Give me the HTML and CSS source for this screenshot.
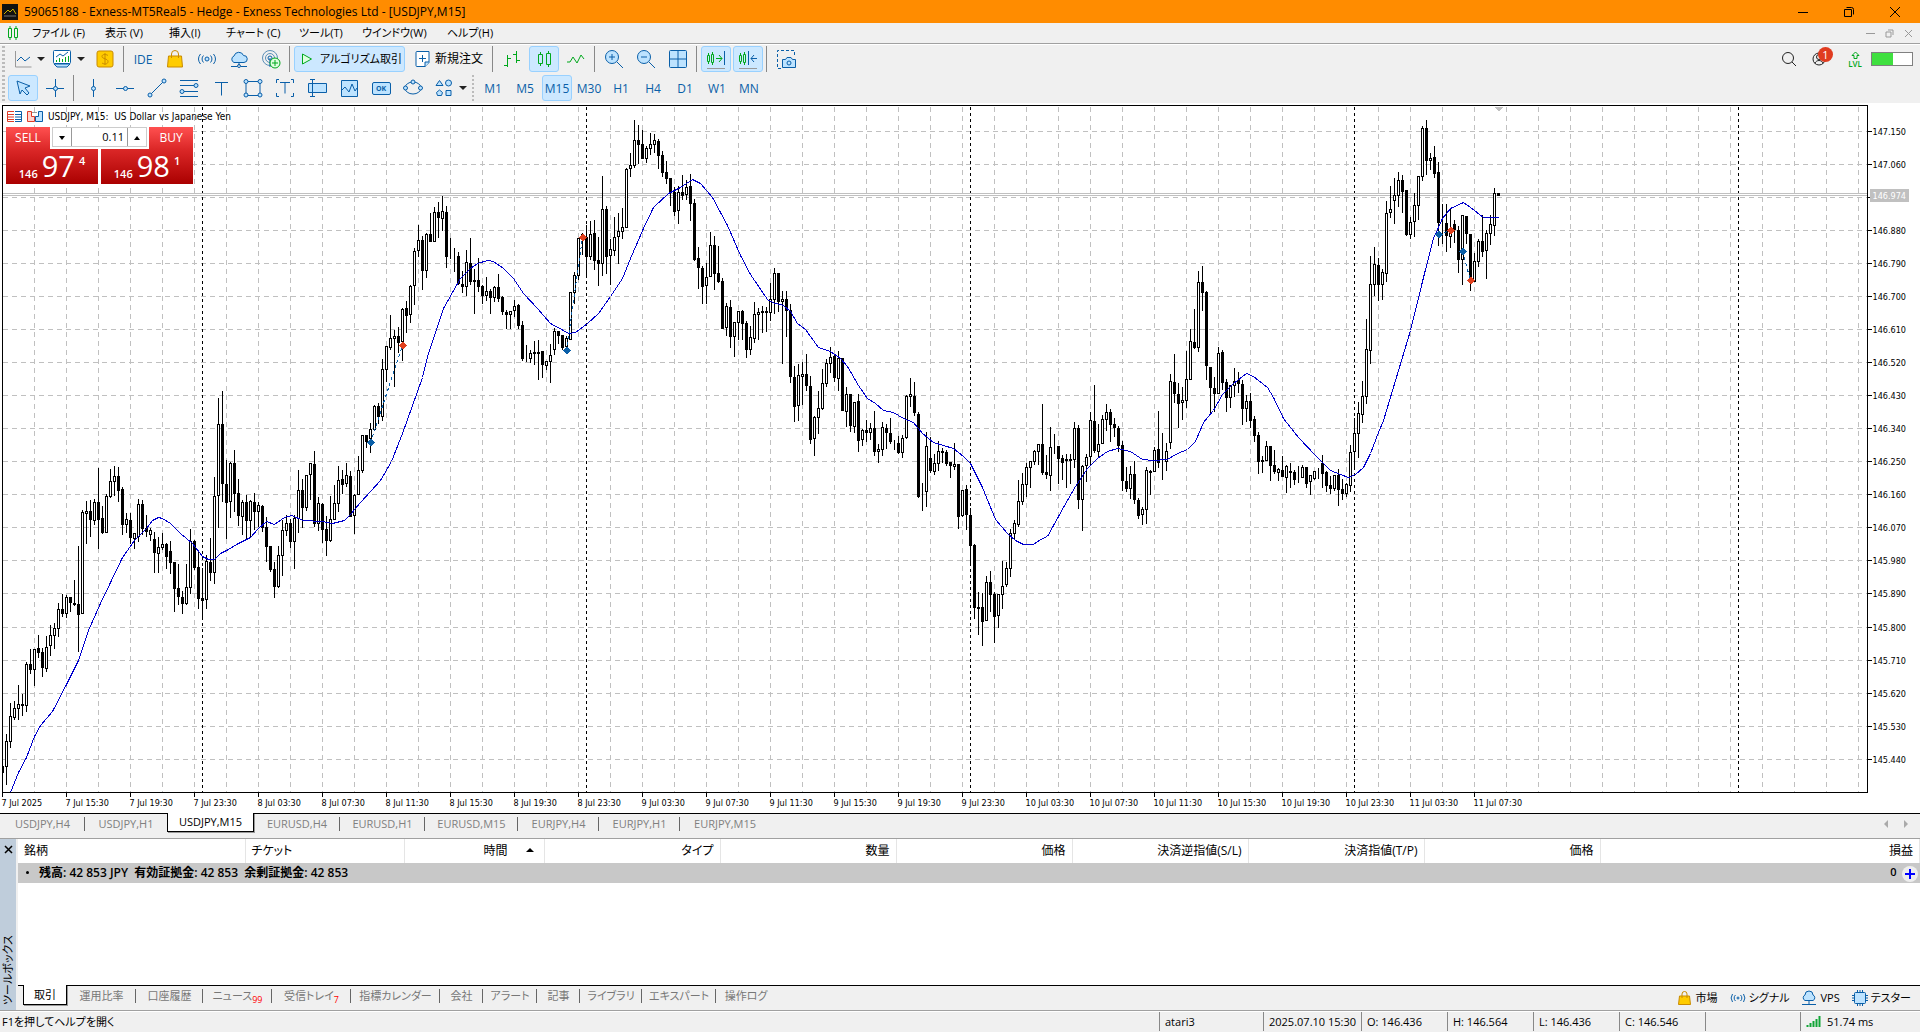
FILE: index.html
```html
<!DOCTYPE html>
<html lang="ja">
<head>
    <meta charset="UTF-8">
    <title>59065188 - Exness-MT5Real5 - Hedge</title>
    <link rel="stylesheet" href="styles.css">
</head>
<body>
<header class="titlebar">
    <svg class="logo" width="16" height="16" viewBox="0 0 16 16"><rect width="16" height="16" fill="#111"/><path d="M2 10L6 6l2 2 3-3 3 5" fill="none" stroke="#c9b100"/><path d="M2 12h12" stroke="#777"/></svg>
    <h1>59065188 - Exness-MT5Real5 - Hedge - Exness Technologies Ltd - [USDJPY,M15]</h1>
    <div class="win">
        <button aria-label="最小化"><svg width="12" height="12" viewBox="0 0 12 12"><path d="M1 6.500h10"/></svg></button>
        <button aria-label="元に戻す"><svg width="12" height="12" viewBox="0 0 12 12"><path d="M1.500 3.500h7v7h-7zM3.500 1.500h5a2 2 0 0 1 2 2v5"/></svg></button>
        <button aria-label="閉じる"><svg width="12" height="12" viewBox="0 0 12 12"><path d="M1 1l10 10M11 1L1 11"/></svg></button>
    </div>
</header>

<nav class="menubar">
    <svg class="logo" width="14" height="16" viewBox="0 0 14 16"><path d="M2.500 3.500h3v9h-3zM8.500 3.500h3v9h-3zM4 1v2M4 13v2M10 1v2M10 13v2" fill="none" stroke="#00a81c"/></svg>
    <div class="menus">
        <button>ファイル (F)</button>
        <button>表示 (V)</button>
        <button>挿入(I)</button>
        <button>チャート (C)</button>
        <button>ツール(T)</button>
        <button>ウインドウ(W)</button>
        <button>ヘルプ(H)</button>
    </div>
    <div class="win small">
        <button aria-label="最小化"><svg width="9" height="9" viewBox="0 0 9 9"><path d="M0 4.500h9"/></svg></button>
        <button aria-label="元に戻す"><svg width="9" height="9" viewBox="0 0 9 9"><path d="M1 3h5v5H1zM3 1h5v5"/></svg></button>
        <button aria-label="閉じる"><svg width="9" height="9" viewBox="0 0 9 9"><path d="M1 1l7 7M8 1L1 8"/></svg></button>
    </div>
</nav>

<div class="toolbars">
    <div class="row">
        <i class="grip"></i>
        <button class="drop" aria-label="チャート"><svg class="ico" viewBox="0 0 20 20"><path d="M3.500 2v16h16" stroke="#999"/><path d="M5 12l4-4 4 4 5-4"/></svg></button>
        <button class="drop wide" aria-label="テンプレート"><svg class="ico" viewBox="0 0 20 20"><rect x="1.500" y="1.500" width="17" height="13" rx="1" fill="#fff"/><path d="M2 15l3 3h10l3-3z" class="fill"/><path d="M4 8l4-3 3 2 5-4"/><path d="M4.500 13v-2M7.500 13v-4M10.500 13v-3M13.500 13V8M16.500 13V7" class="green"/></svg></button>
        <button aria-label="気配値"><svg class="ico" viewBox="0 0 20 20"><rect x="2" y="2" width="16" height="16" rx="2" fill="#fc0" stroke="#c98b00"/><path d="M13 6.500C11 5 7 5 7 7.500s6 2 6 5-4 3-6 1.500M10 4v12" stroke="#c98b00"/></svg></button>
        <i class="sep"></i>
        <button class="text">IDE</button>
        <button aria-label="マーケット"><svg class="ico" viewBox="0 0 20 20"><path d="M3.500 7h13l1 11h-15z" fill="#fc0" stroke="#c98b00"/><path d="M6.500 9V5a3.500 3.500 0 0 1 7 0v4" stroke="#c98b00"/></svg></button>
        <button aria-label="シグナル"><svg class="ico" viewBox="0 0 20 20"><circle cx="10" cy="10" r="2" class="fill"/><path d="M6.500 6.500a5 5 0 0 0 0 7M13.500 6.500a5 5 0 0 1 0 7M3.500 5a8 8 0 0 0 0 10M16.500 5a8 8 0 0 1 0 10"/></svg></button>
        <button aria-label="VPS"><svg class="ico" viewBox="0 0 20 20"><path d="M5 13.500a3.500 3.500 0 0 1 0-6.500 5 5 0 0 1 9.500-.5 3.500 3.500 0 0 1 .5 7z" class="fill"/><path d="M10 13.500v3M2 17.500h6M12 17.500h6"/><circle cx="10" cy="17" r="1.500"/></svg></button>
        <button aria-label="コミュニティ"><svg class="ico" viewBox="0 0 20 20"><circle cx="9" cy="9" r="7.500" stroke="#5a8fb8"/><circle cx="9" cy="9" r="4.500" stroke="#5a8fb8"/><circle cx="9" cy="9" r="2"/><path d="M9 9v9"/><circle cx="14" cy="14" r="5" fill="#dfffe0" stroke="#00a81c"/><path d="M14 11v6M11 14h6" class="green"/></svg></button>
        <i class="sep"></i>
        <button class="on algo"><svg class="ico" viewBox="0 0 20 20"><path d="M5.500 5v10l9-5z" fill="#dfffe0" class="green"/></svg>アルゴリズム取引</button>
        <button class="order"><svg class="ico" viewBox="0 0 20 20"><path d="M4 2.500h12v11l-4 4H4a1 1 0 0 1-1-1v-13a1 1 0 0 1 1-1z" fill="#fff"/><path d="M16 13h-4v5" class="fill"/><path d="M9.500 6v7M6 9.500h7"/></svg>新規注文</button>
        <i class="sep"></i>
        <button aria-label="バーチャート"><svg class="ico green" viewBox="0 0 20 20"><path d="M5.500 6v12M2 16.500h3M6 9.500h3M14.500 2v12M11 5.500h3M15 11.500h3"/></svg></button>
        <button class="on" aria-label="ローソク足"><svg class="ico green" viewBox="0 0 20 20"><path d="M4.500 5.500h4v9h-4zM12.500 4.500h4v11h-4zM6.500 3v2M6.500 15v2M14.500 2v2M14.500 16v2"/></svg></button>
        <button aria-label="ラインチャート"><svg class="ico green" viewBox="0 0 20 20"><path d="M1 13h3l3-5 4 6 4-8 3 4"/></svg></button>
        <i class="sep"></i>
        <button aria-label="拡大"><svg class="ico" viewBox="0 0 20 20"><circle cx="8" cy="8" r="6.500" class="fill"/><path d="M13 13l6 6M8 5v6M5 8h6"/></svg></button>
        <button aria-label="縮小"><svg class="ico" viewBox="0 0 20 20"><circle cx="8" cy="8" r="6.500" class="fill"/><path d="M13 13l6 6M5 8h6"/></svg></button>
        <button aria-label="整列"><svg class="ico" viewBox="0 0 20 20"><rect x="1.500" y="1.500" width="17" height="17" rx="1" class="fill"/><path d="M10 2v16M2 10h16"/></svg></button>
        <i class="sep"></i>
        <button class="on" aria-label="自動スクロール"><svg class="ico" viewBox="0 0 20 20"><path d="M1.500 6.500h2v6h-2zM5.500 5.500h2v8h-2zM2.500 4v2M2.500 13v2M6.500 3v2M6.500 14v2M10 9.500h6M13 6l3 3.500-3 3.500" class="green"/><path d="M18.500 2v14"/><path d="M1 19.500h18" stroke="#999"/></svg></button>
        <button class="on" aria-label="チャートシフト"><svg class="ico" viewBox="0 0 20 20"><path d="M1.500 6.500h2v6h-2zM5.500 5.500h2v8h-2zM2.500 4v2M2.500 13v2M6.500 3v2M6.500 14v2" class="green"/><path d="M10.500 2v14M19 9.500h-6M16 6l-3 3.500 3 3.500"/><path d="M1 19.500h18" stroke="#999"/></svg></button>
        <i class="sep"></i>
        <button aria-label="スクリーンショット"><svg class="ico" viewBox="0 0 20 20"><path d="M5 19.500H1.500v-18h17V7" stroke-dasharray="3 2"/><path d="M6.500 10.500h3l1.500-2h4l1.500 2h3v8h-13z" class="fill"/><circle cx="13" cy="14" r="2"/></svg></button>
        <div class="right">
            <button aria-label="検索"><svg class="ico dark" viewBox="0 0 20 20"><circle cx="9" cy="9" r="5.500"/><path d="M13 13l4 4"/></svg></button>
            <button class="account" aria-label="通知"><svg class="ico dark" viewBox="0 0 20 20"><circle cx="10" cy="10" r="6"/><circle cx="10" cy="8" r="2.500"/><path d="M6 14.500c1-4 7-4 8 0"/></svg><b>1</b></button>
            <span class="lvl"><svg width="9" height="9" viewBox="0 0 9 9"><path d="M4.500 1L1 4.500h2v3h3v-3h2z" fill="none" stroke="#00a81c"/></svg>LVL</span>
            <span class="meter"></span>
        </div>
    </div>
    <div class="row">
        <i class="grip"></i>
        <button class="on" aria-label="カーソル"><svg class="ico" viewBox="0 0 20 20"><path d="M4 3l13 5-5 2 4 5-2 2-5-5-2 4z" class="fill"/></svg></button>
        <button aria-label="十字カーソル"><svg class="ico" viewBox="0 0 20 20"><path d="M10.500 1v18M1 10.500h18"/><circle cx="10.500" cy="10.500" r="2" class="fill"/></svg></button>
        <i class="sep"></i>
        <button aria-label="垂直線"><svg class="ico" viewBox="0 0 20 20"><path d="M10.500 1v18"/><circle cx="10.500" cy="10.500" r="2" class="fill"/></svg></button>
        <button aria-label="水平線"><svg class="ico" viewBox="0 0 20 20"><path d="M1 10.500h18"/><circle cx="10.500" cy="10.500" r="2" class="fill"/></svg></button>
        <button aria-label="トレンドライン"><svg class="ico" viewBox="0 0 20 20"><path d="M3 17L17 3"/><circle cx="3" cy="17" r="2" class="fill"/><circle cx="17" cy="3" r="2" class="fill"/></svg></button>
        <button aria-label="フィボナッチ"><svg class="ico" viewBox="0 0 20 20"><path d="M1 2.500h18M1 7.500h18M1 13.500h18M1 18.500h18"/><circle cx="17" cy="7.500" r="2" class="fill"/><circle cx="3" cy="13.500" r="2" class="fill"/></svg></button>
        <button aria-label="テキスト"><svg class="ico" viewBox="0 0 20 20"><path d="M4 4.500h13M10.500 4.500v13"/></svg></button>
        <button aria-label="長方形"><svg class="ico" viewBox="0 0 20 20"><path d="M3 3.500h14v14H3z"/><circle cx="3" cy="3.500" r="2" class="fill"/><circle cx="17" cy="3.500" r="2" class="fill"/><circle cx="3" cy="17" r="2" class="fill"/><circle cx="17" cy="17" r="2" class="fill"/></svg></button>
        <button aria-label="ラベル"><svg class="ico" viewBox="0 0 20 20"><path d="M4 1.500H1.500V5M16 1.500h2.500V5M4 18.500H1.500V15M16 18.500h2.500V15M5 4.500h10M10 4.500v11"/></svg></button>
        <button aria-label="入力欄"><svg class="ico" viewBox="0 0 20 20"><path d="M1.500 5.500h18v9h-18z" class="fill"/><path d="M5.500 2v16M3 1.500h5M3 18.500h5"/></svg></button>
        <button aria-label="チャートオブジェクト"><svg class="ico" viewBox="0 0 20 20"><path d="M2.500 2.500h16v16h-16z" class="fill"/><path d="M3 12l3-3 4 5 3-8 3 7 2-3"/></svg></button>
        <button class="okbtn"><span>OK</span></button>
        <button aria-label="楕円"><svg class="ico" viewBox="0 0 20 20"><ellipse cx="10" cy="10" rx="8" ry="6"/><circle cx="2.500" cy="10" r="2" class="fill"/><circle cx="17.500" cy="10" r="2" class="fill"/><circle cx="10" cy="4" r="2" class="fill"/></svg></button>
        <button class="drop" aria-label="図形"><svg class="ico" viewBox="0 0 20 20"><path d="M5.500 2.500l3.500 5H2zM12 12.500h5v5h-5z" class="fill"/><circle cx="14.500" cy="5" r="3" class="fill"/><path d="M5.500 12l3 2.500-1 3h-4l-1-3z" class="fill"/></svg></button>
        <i class="grip mid"></i>
        <button class="text">M1</button>
        <button class="text">M5</button>
        <button class="text on">M15</button>
        <button class="text">M30</button>
        <button class="text">H1</button>
        <button class="text">H4</button>
        <button class="text">D1</button>
        <button class="text">W1</button>
        <button class="text">MN</button>
    </div>
</div>

<main class="chart">
    <svg id="plot"></svg>
    <div class="legend">
        <svg width="15" height="12" viewBox="0 0 15 12"><path d="M7 .5H.5v10H7M1 3.500h6M1 6h6M1 8.500h6" fill="none" stroke="#e03c28"/><path d="M8 .5h6.500v10H8M8 3.500h6M8 6h6M8 8.500h6" fill="none" stroke="#0a5fa8"/></svg>
        <svg width="16" height="12" viewBox="0 0 16 12"><path d="M.5 .5h4v5h3v5h-7z" fill="#ffd5d0" stroke="#e03c28"/><path d="M15.500 .5h-4v5h-3v5h7z" fill="#bde3ff" stroke="#0a5fa8"/><path d="M5 1.500h5" stroke="#999"/></svg>
        <span>USDJPY, M15:&nbsp; US Dollar vs Japanese Yen</span>
    </div>
    <div class="oneclick">
        <div class="head">
            <button class="side">SELL</button>
            <div class="lot">
                <button class="down" aria-label="減らす"></button>
                <input type="text" value="0.11" aria-label="数量">
                <button class="up" aria-label="増やす"></button>
            </div>
            <button class="side">BUY</button>
        </div>
        <div class="quotes">
            <button><small>146</small><strong>97</strong><sup>4</sup></button>
            <button><small>146</small><strong>98</strong><sup>1</sup></button>
        </div>
    </div>
</main>

<div class="charttabs">
    <button>USDJPY,H4</button>
    <button>USDJPY,H1</button>
    <button class="cur">USDJPY,M15</button>
    <button>EURUSD,H4</button>
    <button>EURUSD,H1</button>
    <button>EURUSD,M15</button>
    <button>EURJPY,H4</button>
    <button>EURJPY,H1</button>
    <button>EURJPY,M15</button>
    <span class="arrows"><i></i><i></i></span>
</div>

<section class="toolbox">
    <div class="strip">
        <button aria-label="閉じる"><svg width="9" height="9" viewBox="0 0 9 9"><path d="M1 1l7 7M8 1L1 8" stroke="#000" stroke-width="1.500"/></svg></button>
        <span>ツールボックス</span>
    </div>
    <div class="body">
        <table>
            <colgroup>
                <col class="c1"><col class="c2"><col class="c3"><col class="c4"><col class="c4"><col class="c4"><col class="c4"><col class="c4"><col class="c4"><col>
            </colgroup>
            <thead>
            <tr>
                <th class="left">銘柄</th>
                <th class="left">チケット</th>
                <th class="sorted">時間</th>
                <th>タイプ</th>
                <th>数量</th>
                <th>価格</th>
                <th>決済逆指値(S/L)</th>
                <th>決済指値(T/P)</th>
                <th>価格</th>
                <th>損益</th>
            </tr>
            </thead>
            <tbody>
            <tr>
                <td colspan="9" class="left"><i class="dot"></i>残高: 42 853 JPY&nbsp; 有効証拠金: 42 853&nbsp; 余剰証拠金: 42 853</td>
                <td class="sum">0<button aria-label="追加"><svg width="10" height="10" viewBox="0 0 10 10"><path d="M5 0v10M0 5h10" stroke="#00f" stroke-width="2"/></svg></button></td>
            </tr>
            </tbody>
        </table>
        <div class="tabs">
            <div class="list">
                <button class="cur">取引</button>
                <button>運用比率</button>
                <button>口座履歴</button>
                <button>ニュース<sub>99</sub></button>
                <button>受信トレイ<sub>7</sub></button>
                <button>指標カレンダー</button>
                <button>会社</button>
                <button>アラート</button>
                <button>記事</button>
                <button>ライブラリ</button>
                <button>エキスパート</button>
                <button>操作ログ</button>
            </div>
            <div class="links">
                <a href="#"><svg viewBox="0 0 16 16"><path d="M2.500 6h10l1 8.500h-12z" fill="#fc0" stroke="#c98b00"/><path d="M5 8V4a2.500 2.500 0 0 1 5 0v4" stroke="#c98b00"/></svg>市場</a>
                <a href="#"><svg viewBox="0 0 16 16"><circle cx="8" cy="8" r="1" class="fill"/><path d="M5.500 5a4 4 0 0 0 0 6M10.500 5a4 4 0 0 1 0 6M2.500 4a7 7 0 0 0 0 8M13.500 4a7 7 0 0 1 0 8"/></svg>シグナル</a>
                <a href="#"><svg viewBox="0 0 16 16"><path d="M4 10.500a3 3 0 0 1 0-5.500 4 4 0 0 1 8 0 3 3 0 0 1 0 5.500z" class="fill"/><path d="M8 11v3M1 14.500h14"/></svg>VPS</a>
                <a href="#"><svg viewBox="0 0 16 16"><path d="M5.500 0v16M8 0v16M10.500 0v16M0 5.500h16M0 8h16M0 10.500h16"/><rect x="2.500" y="2.500" width="11" height="11" rx="1" class="fill"/></svg>テスター</a>
            </div>
        </div>
    </div>
</section>

<footer class="status">
    <span class="help">F1を押してヘルプを開く</span>
    <span class="s1">atari3</span>
    <span class="s2">2025.07.10 15:30</span>
    <span class="s3">O: 146.436</span>
    <span class="s3">H: 146.564</span>
    <span class="s3">L: 146.436</span>
    <span class="s3">C: 146.546</span>
    <span class="s4"></span>
    <span class="s5"><svg width="15" height="11" viewBox="0 0 15 11"><path d="M1.500 11V9M4.500 11V7M7.500 11V5M10.500 11V3M13.500 11V0" stroke="#12a537" stroke-width="2"/></svg>51.74 ms</span>
</footer>

<script src="chart.js"></script>
</body>
</html>
```
FILE: chart.js
```js
// 足データ: [高値, 始値, 終値, 安値] (画面のY座標)
const bars = [
    [766,766,772,772],[733,766,741,784],[702,741,716,747],[700,717,708,719],[684,708,704,719],
    [693,704,705,715],[661,705,664,711],[648,664,669,673],[648,669,649,685],[634,648,652,657],
    [647,652,667,676],[635,668,647,671],[624,645,635,655],[622,635,628,648],[602,628,609,636],
    [593,609,613,616],[594,613,597,617],[597,597,602,611],[579,603,604,605],[545,604,614,651],
    [509,613,512,613],[500,513,511,543],[499,511,519,536],[498,520,502,524],[467,502,519,548],
    [505,518,532,533],[493,532,496,532],[468,496,481,497],[465,481,476,495],[466,476,490,501],
    [486,489,524,534],[512,524,519,532],[512,520,537,543],[532,538,533,548],[498,536,504,541],
    [499,504,528,534],[514,528,531,536],[527,534,530,540],[531,539,552,572],[536,553,547,572],
    [532,547,544,549],[542,544,556,568],[540,551,562,573],[562,562,588,611],[563,588,596,604],
    [590,597,603,613],[563,603,587,604],[528,587,541,593],[539,541,567,569],[549,567,598,608],
    [567,598,600,617],[554,599,561,608],[537,562,572,580],[476,572,496,583],[397,495,424,527],
    [390,424,483,501],[459,484,502,538],[461,501,463,517],[449,463,493,511],[478,493,515,525],
    [499,516,502,534],[494,502,520,539],[499,520,501,536],[492,502,511,529],[501,511,505,526],
    [504,506,527,531],[516,527,546,561],[546,546,569,571],[561,569,586,597],[545,586,555,587],
    [519,555,530,575],[514,530,523,535],[518,523,541,547],[514,541,518,568],[469,518,490,532],
    [478,490,507,527],[475,507,475,510],[462,474,463,499],[450,464,523,526],[496,523,503,530],
    [502,504,529,542],[515,529,540,555],[495,540,519,541],[484,519,503,519],[465,503,480,511],
    [469,479,484,493],[462,483,475,486],[470,476,516,516],[493,515,495,533],[455,494,470,494],
    [435,470,435,472],[435,435,441,447],[422,438,429,452],[404,429,406,429],[402,406,416,423],
    [358,416,369,420],[346,369,346,381],[314,347,338,349],[329,338,336,386],[326,336,342,352],
    [307,341,309,360],[300,308,315,332],[284,314,286,322],[247,285,251,304],[224,250,240,256],
    [235,240,270,289],[232,270,234,277],[212,234,241,241],[206,241,212,241],[201,212,217,237],
    [195,218,211,230],[205,212,256,267],[237,256,256,258],[247,256,256,271],[251,256,283,284],
    [270,284,286,292],[249,286,262,295],[237,263,281,284],[268,280,281,313],[257,280,286,291],
    [284,286,295,303],[276,295,291,300],[288,291,297,313],[285,297,287,301],[273,287,298,301],
    [295,297,311,314],[309,312,314,328],[310,314,311,328],[299,310,306,316],[303,305,325,328],
    [320,325,358,360],[344,358,358,361],[349,358,353,362],[340,352,353,364],[339,352,353,379],
    [351,351,364,377],[360,365,361,369],[343,361,355,382],[327,349,331,354],[331,331,335,343],
    [335,335,347,349],[335,346,338,346],[292,339,292,339],[271,292,275,303],[237,275,238,279],
    [232,234,238,254],[224,237,256,276],[220,256,234,259],[219,233,260,269],[236,260,263,285],
    [175,263,209,275],[205,209,256,273],[238,255,249,284],[216,250,237,255],[212,236,231,263],
    [207,231,227,238],[167,227,169,227],[152,168,165,176],[119,165,140,167],[124,140,144,163],
    [129,144,158,158],[145,158,148,162],[132,148,144,154],[133,144,140,152],[138,141,155,168],
    [150,155,172,176],[160,172,178,183],[178,178,191,205],[186,192,211,215],[185,210,192,223],
    [174,192,195,199],[179,194,187,199],[173,186,203,220],[198,203,259,260],[246,258,267,288],
    [265,268,286,303],[262,285,277,303],[231,276,245,276],[235,245,273,289],[245,273,281,282],
    [277,281,328,328],[302,327,306,335],[299,307,336,347],[321,336,322,356],[310,322,311,339],
    [309,311,323,339],[320,323,349,357],[325,349,337,354],[301,338,314,342],[307,314,312,339],
    [305,311,312,332],[306,311,312,331],[282,312,299,320],[267,299,273,313],[273,273,301,311],
    [290,301,299,363],[290,299,310,336],[303,310,376,382],[365,377,406,421],[363,405,375,420],
    [361,376,374,404],[353,374,385,390],[375,386,439,443],[415,438,417,455],[390,417,408,433],
    [368,408,383,409],[358,383,363,386],[346,363,357,372],[353,356,377,381],[350,378,358,390],
    [358,358,410,410],[386,411,394,426],[393,394,425,431],[401,426,402,432],[393,401,440,451],
    [428,439,430,445],[419,430,432,441],[422,432,428,439],[410,428,451,455],[443,451,449,462],
    [421,449,427,455],[423,428,432,448],[417,433,441,443],[439,442,442,449],[435,443,452,453],
    [434,452,438,457],[394,437,396,438],[377,396,394,406],[381,396,412,415],[411,414,496,497],
    [482,498,498,510],[431,491,446,506],[436,458,470,472],[453,471,463,474],[440,463,451,470],
    [447,451,452,462],[449,452,463,465],[461,462,465,477],[442,466,464,469],[464,464,516,528],
    [490,515,490,516],[484,489,514,529],[507,515,545,565],[543,545,607,618],[591,607,608,634],
    [592,607,621,645],[575,620,582,620],[570,582,594,611],[591,594,616,642],[594,615,594,627],
    [560,594,586,608],[561,584,568,586],[528,568,533,576],[519,533,523,539],[479,524,501,526],
    [472,501,484,504],[462,484,467,496],[460,467,461,487],[449,461,451,464],[443,451,444,464],
    [403,444,472,474],[454,472,474,478],[426,475,447,490],[433,446,446,453],[446,446,458,483],
    [454,458,462,479],[453,459,460,487],[453,459,460,483],[421,459,428,467],[424,428,499,508],
    [464,499,466,530],[453,465,457,481],[411,456,420,465],[384,421,450,452],[423,451,444,456],
    [414,443,419,443],[403,419,412,430],[408,412,424,441],[417,424,427,436],[425,428,445,451],
    [440,445,480,490],[466,481,488,491],[465,488,474,498],[460,474,499,503],[497,500,515,518],
    [506,514,509,524],[466,509,470,523],[469,471,472,494],[446,471,450,471],[410,449,462,467],
    [432,461,461,479],[442,461,451,470],[373,442,381,448],[353,382,393,402],[382,394,403,427],
    [386,402,400,419],[350,400,379,407],[328,379,341,379],[308,342,347,348],[270,347,282,351],
    [265,282,292,310],[290,292,365,379],[367,367,387,413],[376,388,393,411],[346,393,353,393],
    [349,352,382,389],[378,382,397,411],[384,397,385,407],[367,385,381,396],[371,380,383,392],
    [379,384,408,424],[394,408,401,421],[392,401,420,427],[415,419,435,441],[431,435,461,473],
    [455,460,461,472],[440,460,446,460],[446,446,465,480],[449,465,471,473],[467,472,469,480],
    [455,470,476,476],[464,477,466,492],[462,471,472,487],[469,472,479,484],[465,478,478,482],
    [464,477,467,477],[467,467,483,487],[475,481,475,494],[470,478,471,479],[467,472,472,478],
    [454,463,473,487],[470,472,485,491],[475,485,488,493],[475,488,475,490],[468,475,489,505],
    [478,489,493,499],[482,493,484,496],[444,485,452,491],[417,451,433,468],[401,433,413,457],
    [380,414,396,422],[318,396,349,403],[255,350,284,363],[246,284,264,295],[257,265,284,300],
    [268,284,272,299],[200,273,213,281],[185,212,209,217],[177,200,195,223],[171,195,180,206],
    [174,180,191,212],[190,190,234,235],[216,234,222,238],[192,221,205,236],[175,205,176,219],
    [125,176,128,180],[119,128,160,174],[152,160,158,169],[145,157,173,177],[161,172,222,245],
    [203,223,223,243],[203,223,235,251],[207,236,228,247],[219,224,229,242],[225,230,259,272],
    [214,259,215,284],[215,216,233,243],[234,234,276,290],[252,281,261,281],[238,261,241,266],
    [214,241,251,256],[229,250,233,278],[214,233,224,244],[187,225,193,235],[193,193,195,195]
]

// 移動平均線
const ma = '10,792 18,772 26,757 34,736 40,725 52,711 66,684 78,660 88,630 100,603 110,582 122,557 134,540 146,528 152,520 158,517 162,518 170,523 180,533 192,543 202,556 208,559 214,559 220,553 228,549 238,543 250,537 258,528 266,521 274,524 284,517 291,515 303,520 322,521 332,523 344,520 350,514 360,502 380,480 391,461 402,433 412,405 422,377 428,353 435,332 443,308 452,292 460,278 470,268 477,263 487,260 493,261 503,268 513,278 523,293 537,308 550,323 563,330 568,333 575,332 587,323 598,313 610,296 622,278 630,258 643,228 653,207 668,193 680,187 692,179 700,183 712,197 727,225 740,255 750,274 767,299 772,302 783,305 790,311 797,323 805,329 818,347 830,351 840,358 847,366 858,385 867,398 875,403 883,410 893,412 903,418 913,422 922,433 933,442 953,448 963,456 970,463 982,487 995,519 1007,533 1015,540 1023,544 1033,544 1040,539 1047,536 1053,525 1063,507 1075,486 1087,468 1097,458 1107,451 1117,448 1130,451 1142,459 1153,460 1167,459 1177,453 1187,449 1195,441 1203,422 1213,410 1222,394 1233,383 1246,373 1253,376 1267,387 1273,397 1283,418 1298,437 1315,455 1330,470 1340,474 1348,477 1355,474 1363,467 1370,453 1378,432 1383,420 1395,380 1410,330 1423,277 1433,238 1442,218 1450,208 1463,202 1470,207 1483,217 1492,217 1498,217'

// 取引: 買いX, 買いY, 決済X, 決済Y
const trades = [[370,442,402,345],[566,350,582,237],[1438,234,1450,230],[1462,251,1470,280]]

const dates = ['7 Jul 2025','7 Jul 15:30','7 Jul 19:30','7 Jul 23:30','8 Jul 03:30','8 Jul 07:30','8 Jul 11:30','8 Jul 15:30',
    '8 Jul 19:30','8 Jul 23:30','9 Jul 03:30','9 Jul 07:30','9 Jul 11:30','9 Jul 15:30','9 Jul 19:30','9 Jul 23:30',
    '10 Jul 03:30','10 Jul 07:30','10 Jul 11:30','10 Jul 15:30','10 Jul 19:30','10 Jul 23:30','11 Jul 03:30','11 Jul 07:30']

const plot = document.querySelector('#plot')
const TOP = 103

function draw() {
    const w = plot.clientWidth
    const right = w - 53
    const bottom = plot.clientHeight - 21 + TOP
    let s = ''
    const line = (cls, x1, y1, x2, y2) => `<path class="${cls}" d="M${x1} ${y1}L${x2} ${y2}"/>`

    // グリッド
    for (let x = 34; x < right; x += 32) s += line('grid', x, 106, x, bottom)
    for (let i = 0; i < 20; i++) {
        const y = 131 + Math.floor(i * 33.07)
        s += line('grid', 2, y, right, y)
        s += line('axis', right, y, right + 4, y)
        if (i !== 2) s += `<text x="${right + 5}" y="${y + 3}">${(147.15 - i * 0.09).toFixed(3)}</text>`
    }
    for (let x = 202; x < right; x += 384) s += line('day', x, 106, x, bottom)
    s += line('bid', 2, 193, right, 193) + line('bid', 2, 195, right, 195)

    // ローソク足
    bars.forEach(([h, o, c, l], i) => {
        const x = 2 + i * 4
        const y = Math.min(o, c)
        s += line('wick', x, h, x, Math.max(l, h + 1))
        s += `<rect class="${c < o ? 'up' : 'dn'}" x="${i ? x - 1 : x}" y="${y}" width="${i ? 2 : 1}" height="${Math.abs(o - c)}"/>`
    })
    s += `<polyline class="ma" points="${ma}"/>`
    trades.forEach(([x1, y1, x2, y2]) => {
        s += line('deal', x1, y1, x2, y2)
        s += `<path class="buy" d="M${x1} ${y1 - 4}l4 4-4 4-4-4z"/><path class="sell" d="M${x2} ${y2 - 4}l4 4-4 4-4-4z"/>`
    })

    // 枠と軸
    s += `<path class="axis" d="M2 ${bottom}V105H${right}V${bottom}H2"/>`
    dates.forEach((d, i) => {
        const x = 2 + i * 64
        s += line('axis', x, bottom, x, bottom + 4)
        s += `<text x="${x - 1}" y="${bottom + 13}">${d}</text>`
    })
    s += '<path class="shift" d="M1493 106h10l-5 5z"/>'
    s += `<rect class="tag" x="${right + 2}" y="188" width="39" height="13"/><text class="now" x="${right + 5}" y="198">146.974</text>`
    plot.innerHTML = `<g transform="translate(.5 ${.5 - TOP})">${s}</g>`
}

draw()
window.onresize = draw
```
FILE: styles.css
```css
* {
    box-sizing: border-box;
}

body {
    margin: 0;
    min-height: 100vh;
    display: flex;
    flex-direction: column;
    background: #f0f0f0;
    color: #000;
    font-family: "Open Sans", "Noto Sans CJK JP", sans-serif;
    font-size: 11px;
    line-height: 16px;
    font-feature-settings: "palt";
}

button, input {
    margin: 0;
    padding: 0;
    border: 0;
    background: none;
    color: inherit;
    font: inherit;
    font-feature-settings: inherit;
    white-space: nowrap;
}

svg {
    display: block;
    flex: none;
}

/* タイトルバー */
.titlebar {
    display: flex;
    align-items: center;
    height: 23px;
    padding-left: 2px;
    background: #ff8c00;
}

.titlebar h1 {
    flex: 1;
    margin: 0 0 0 6px;
    font-size: 12px;
    font-weight: normal;
}

.win {
    display: flex;
    padding-right: 2px;
}

.win button {
    display: flex;
    justify-content: center;
    align-items: center;
    width: 46px;
    height: 20px;
}

.win svg {
    fill: none;
    stroke: #000;
}

.win.small button {
    width: 19px;
}

.win.small svg {
    stroke: #999;
}

/* メニュー */
.menubar {
    display: flex;
    align-items: center;
    height: 21px;
    padding-left: 6px;
    border-bottom: 1px solid #a0a0a0;
}

.menus {
    flex: 1;
    display: grid;
    grid-template-columns: 73px 64px 57px 73px 63px 85px auto;
    margin-left: 12px;
}

.menus button {
    text-align: left;
}

/* ツールバー */
.toolbars {
    display: flex;
    flex-direction: column;
    gap: 3px;
    height: 59px;
    padding-top: 1px;
    border-top: 1px solid #fff;
}

.row {
    display: flex;
    gap: 2px;
    height: 26px;
}

.row button {
    position: relative;
    display: flex;
    justify-content: center;
    align-items: center;
    width: 30px;
    height: 26px;
    border: 1px solid transparent;
    border-radius: 3px;
}

.row button.on {
    border-color: #99d1ff;
    background: #cce8ff;
}

.row .text {
    padding-top: 1px;
    color: #0a5fa8;
    font-size: 12px;
}

.row .drop {
    justify-content: flex-start;
    gap: 5px;
    width: 38px;
    padding-left: 3px;
}

.row .drop.wide {
    width: 40px;
}

.drop::after {
    content: "";
    border: 4px solid transparent;
    border-top-color: #222;
    border-bottom: 0;
}

.row .algo {
    width: 111px;
    gap: 3px;
}

.row .order {
    width: 82px;
    gap: 2px;
    font-size: 12px;
}

.ico {
    width: 20px;
    height: 20px;
    fill: none;
    stroke: #0a5fa8;
}

.fill {
    fill: #bde3ff;
}

.green {
    stroke: #00a81c;
}

.dark {
    stroke: #222;
}

.sep {
    width: 4px;
    background: linear-gradient(#888, #888) 1px 0 / 1px 100% no-repeat;
}

.grip {
    width: 3px;
    margin: 0 1px 0 2px;
    background: repeating-linear-gradient(#bbb 0 2px, transparent 2px 4px);
}

.grip.mid {
    width: 2px;
    margin: 0 2px;
}

.okbtn span {
    width: 19px;
    border: 1px solid #0a5fa8;
    border-radius: 2px;
    background: #bde3ff;
    color: #0a5fa8;
    font-size: 7px;
    font-weight: bold;
    line-height: 11px;
}

.right {
    display: flex;
    align-items: center;
    margin-left: auto;
    padding-right: 7px;
}

.account b {
    position: absolute;
    top: 0;
    right: 0;
    width: 15px;
    height: 15px;
    border-radius: 50%;
    background: #e03c20;
    color: #fff;
    font-size: 11px;
    font-weight: normal;
    line-height: 15px;
}

.lvl {
    display: flex;
    flex-direction: column;
    align-items: center;
    width: 14px;
    margin: 0 9px 0 14px;
    color: #00a81c;
    font-size: 8px;
    font-weight: 600;
    line-height: 8px;
}

.meter {
    width: 42px;
    height: 14px;
    border: 1px solid #808080;
    background: linear-gradient(to right, #3fe03f 53%, #fff 53%);
}

/* チャート */
.chart {
    position: relative;
    flex: 1;
    min-height: 300px;
    background: #fff;
    overflow: hidden;
}

#plot {
    position: absolute;
    width: 100%;
    height: 100%;
    font-family: "DejaVu Sans Condensed", "Roboto", sans-serif;
    font-size: 9px;
}

#plot path, #plot rect, #plot polyline {
    fill: none;
    stroke-width: 1;
    shape-rendering: crispEdges;
}

#plot .grid {
    stroke: #c0c0c0;
    stroke-dasharray: 5 4;
}

#plot .day {
    stroke: #000;
    stroke-dasharray: 3 3;
}

#plot .bid {
    stroke: #c0c0c0;
}

#plot .wick, #plot .axis {
    stroke: #000;
}

#plot .up {
    stroke: #000;
    fill: #fff;
}

#plot .dn {
    stroke: #000;
    fill: #000;
}

#plot .ma {
    stroke: #0000cd;
}

#plot .deal {
    stroke: #0a5fa8;
    stroke-dasharray: 3 3;
}

#plot .buy {
    fill: #0a5fa8;
}

#plot .sell {
    fill: #e0401e;
}

#plot .shift, #plot .tag {
    fill: #c0c0c0;
}

#plot .now {
    fill: #fff;
}

.legend {
    position: absolute;
    top: 8px;
    left: 7px;
    display: flex;
    align-items: center;
    gap: 5px;
    height: 12px;
    font-family: "DejaVu Sans Condensed", "Roboto", sans-serif;
    font-size: 10px;
}

.oneclick {
    position: absolute;
    top: 24px;
    left: 6px;
    width: 187px;
    background: #fff;
}

.head, .quotes, .lot {
    display: flex;
    justify-content: space-between;
}

.side {
    width: 44px;
    height: 22px;
    background: linear-gradient(#ff5050, #dc2828);
    color: #fff;
    font-size: 12px;
}

.lot {
    width: 95px;
    height: 20px;
    border: 1px solid #ccc;
}

.lot button {
    width: 18px;
}

.lot button::after {
    content: "";
    display: inline-block;
    vertical-align: middle;
    border: 3px solid transparent;
}

.lot .down::after {
    border-top: 4px solid #000;
    border-bottom: 0;
}

.lot .up::after {
    border-bottom: 4px solid #000;
    border-top: 0;
}

.lot input {
    width: 57px;
    padding-right: 3px;
    border: 1px solid #999;
    border-width: 0 1px;
    text-align: right;
    font-size: 11px;
}

.quotes button {
    display: flex;
    justify-content: center;
    align-items: flex-end;
    width: 92px;
    height: 35px;
    padding-bottom: 3px;
    background: linear-gradient(#dc2828, #aa0000);
    color: #fff;
}

.quotes small {
    font-size: 11px;
    font-weight: 600;
    line-height: 14px;
}

.quotes strong {
    margin: 0 4px;
    font-size: 29px;
    font-weight: normal;
    line-height: 30px;
}

.quotes sup {
    align-self: flex-start;
    font-size: 11px;
    font-weight: 600;
    line-height: 24px;
}

/* チャートタブ */
.charttabs {
    display: grid;
    grid-template-columns: 85px 82px 87px 86px 85px 93px 81px 81px 90px auto;
    height: 25px;
    padding-bottom: 5px;
    border-top: 1px solid #000;
    color: #808080;
}

.charttabs button, .tabs .list button {
    position: relative;
    text-align: center;
}

.charttabs button:not(.cur)::after, .tabs .list button:not(.cur)::after {
    content: "";
    position: absolute;
    top: 3px;
    right: 0;
    height: 14px;
    border-right: 1px solid #666;
}

.charttabs button:nth-child(2)::after, .charttabs button:nth-child(9)::after,
.tabs .list button:last-child::after {
    display: none;
}

.charttabs .cur, .tabs .cur {
    height: 19px;
    margin-top: -1px;
    border: 1px solid #000;
    border-top: 0;
    box-shadow: 1px 1px #999;
    background: #fff;
    color: #000;
}

.arrows {
    display: flex;
    justify-content: flex-end;
    align-items: center;
    gap: 16px;
    padding-right: 12px;
}

.arrows i {
    border: 4px solid transparent;
    border-right: 4px solid #aaa;
    border-left: 0;
}

.arrows i + i {
    border-left: 4px solid #aaa;
    border-right: 0;
}

/* ツールボックス */
.toolbox {
    display: flex;
    height: 173px;
    border-top: 1px solid #a0a0a0;
    border-bottom: 1px solid #a0a0a0;
}

.strip {
    display: flex;
    flex-direction: column;
    justify-content: space-between;
    align-items: center;
    width: 16px;
    margin-right: 2px;
    padding: 6px 0 5px;
    background: #bfcddb;
}

.strip span {
    writing-mode: vertical-rl;
    text-orientation: sideways;
    transform: rotate(180deg);
    line-height: 14px;
}

.body {
    flex: 1;
    display: flex;
    flex-direction: column;
    justify-content: space-between;
    background: #fff;
}

table {
    width: 100%;
    table-layout: fixed;
    border-collapse: collapse;
}

.c1 {
    width: 227px;
}

.c2 {
    width: 159px;
}

.c3 {
    width: 140px;
}

.c4 {
    width: 176px;
}

th {
    height: 24px;
    padding: 0 6px;
    border-right: 1px solid #e5e5e5;
    font-size: 12px;
    font-weight: normal;
    text-align: right;
}

th.left, td.left {
    text-align: left;
}

.sorted::after {
    content: "";
    display: inline-block;
    margin: 0 4px 3px 18px;
    border: 4px solid transparent;
    border-top: 0;
    border-bottom-color: #000;
}

td {
    height: 20px;
    padding: 0 6px;
    background: #c8c8c8;
    font-size: 12px;
    font-weight: 600;
}

.dot {
    display: inline-block;
    width: 3px;
    height: 3px;
    margin: 0 10px 3px 2px;
    border-radius: 50%;
    background: #000;
}

td.sum {
    padding: 0 2px;
    font-size: 11px;
    text-align: right;
}

.sum button {
    display: inline-block;
    vertical-align: middle;
    margin-left: 5px;
    padding: 3px;
    border-radius: 50%;
    background: #eee;
}

.tabs {
    display: flex;
    justify-content: space-between;
    height: 25px;
    border-top: 1px solid #000;
    background: #f0f0f0;
}

.tabs .list {
    display: grid;
    grid-template-columns: 44px 69px 67px 69px 79px 89px 43px 54px 43px 62px 74px 60px;
    height: 20px;
    margin-left: 5px;
    color: #777;
}

.tabs .cur {
    height: 20px;
}

sub {
    color: #f00;
    font-size: 9px;
    line-height: 8px;
}

.links {
    display: flex;
    align-items: center;
    gap: 12px;
    padding-right: 9px;
}

.links a {
    display: flex;
    align-items: center;
    gap: 3px;
    color: #000;
    text-decoration: none;
}

.links svg {
    width: 16px;
    height: 16px;
    fill: none;
    stroke: #0a5fa8;
}

/* ステータスバー */
.status {
    display: flex;
    height: 21px;
    padding-bottom: 1px;
    border-top: 1px solid #fff;
    line-height: 19px;
}

.status span {
    padding-left: 5px;
    border-left: 1px solid #888;
    white-space: nowrap;
}

.status .help {
    flex: 1;
    padding-left: 2px;
    border: 0;
}

.status .s1 {
    width: 104px;
}

.status .s2 {
    width: 98px;
}

.status .s3 {
    width: 86px;
}

.status .s4 {
    width: 95px;
}

.status .s5 {
    display: flex;
    align-items: center;
    gap: 6px;
    width: 120px;
}
```
